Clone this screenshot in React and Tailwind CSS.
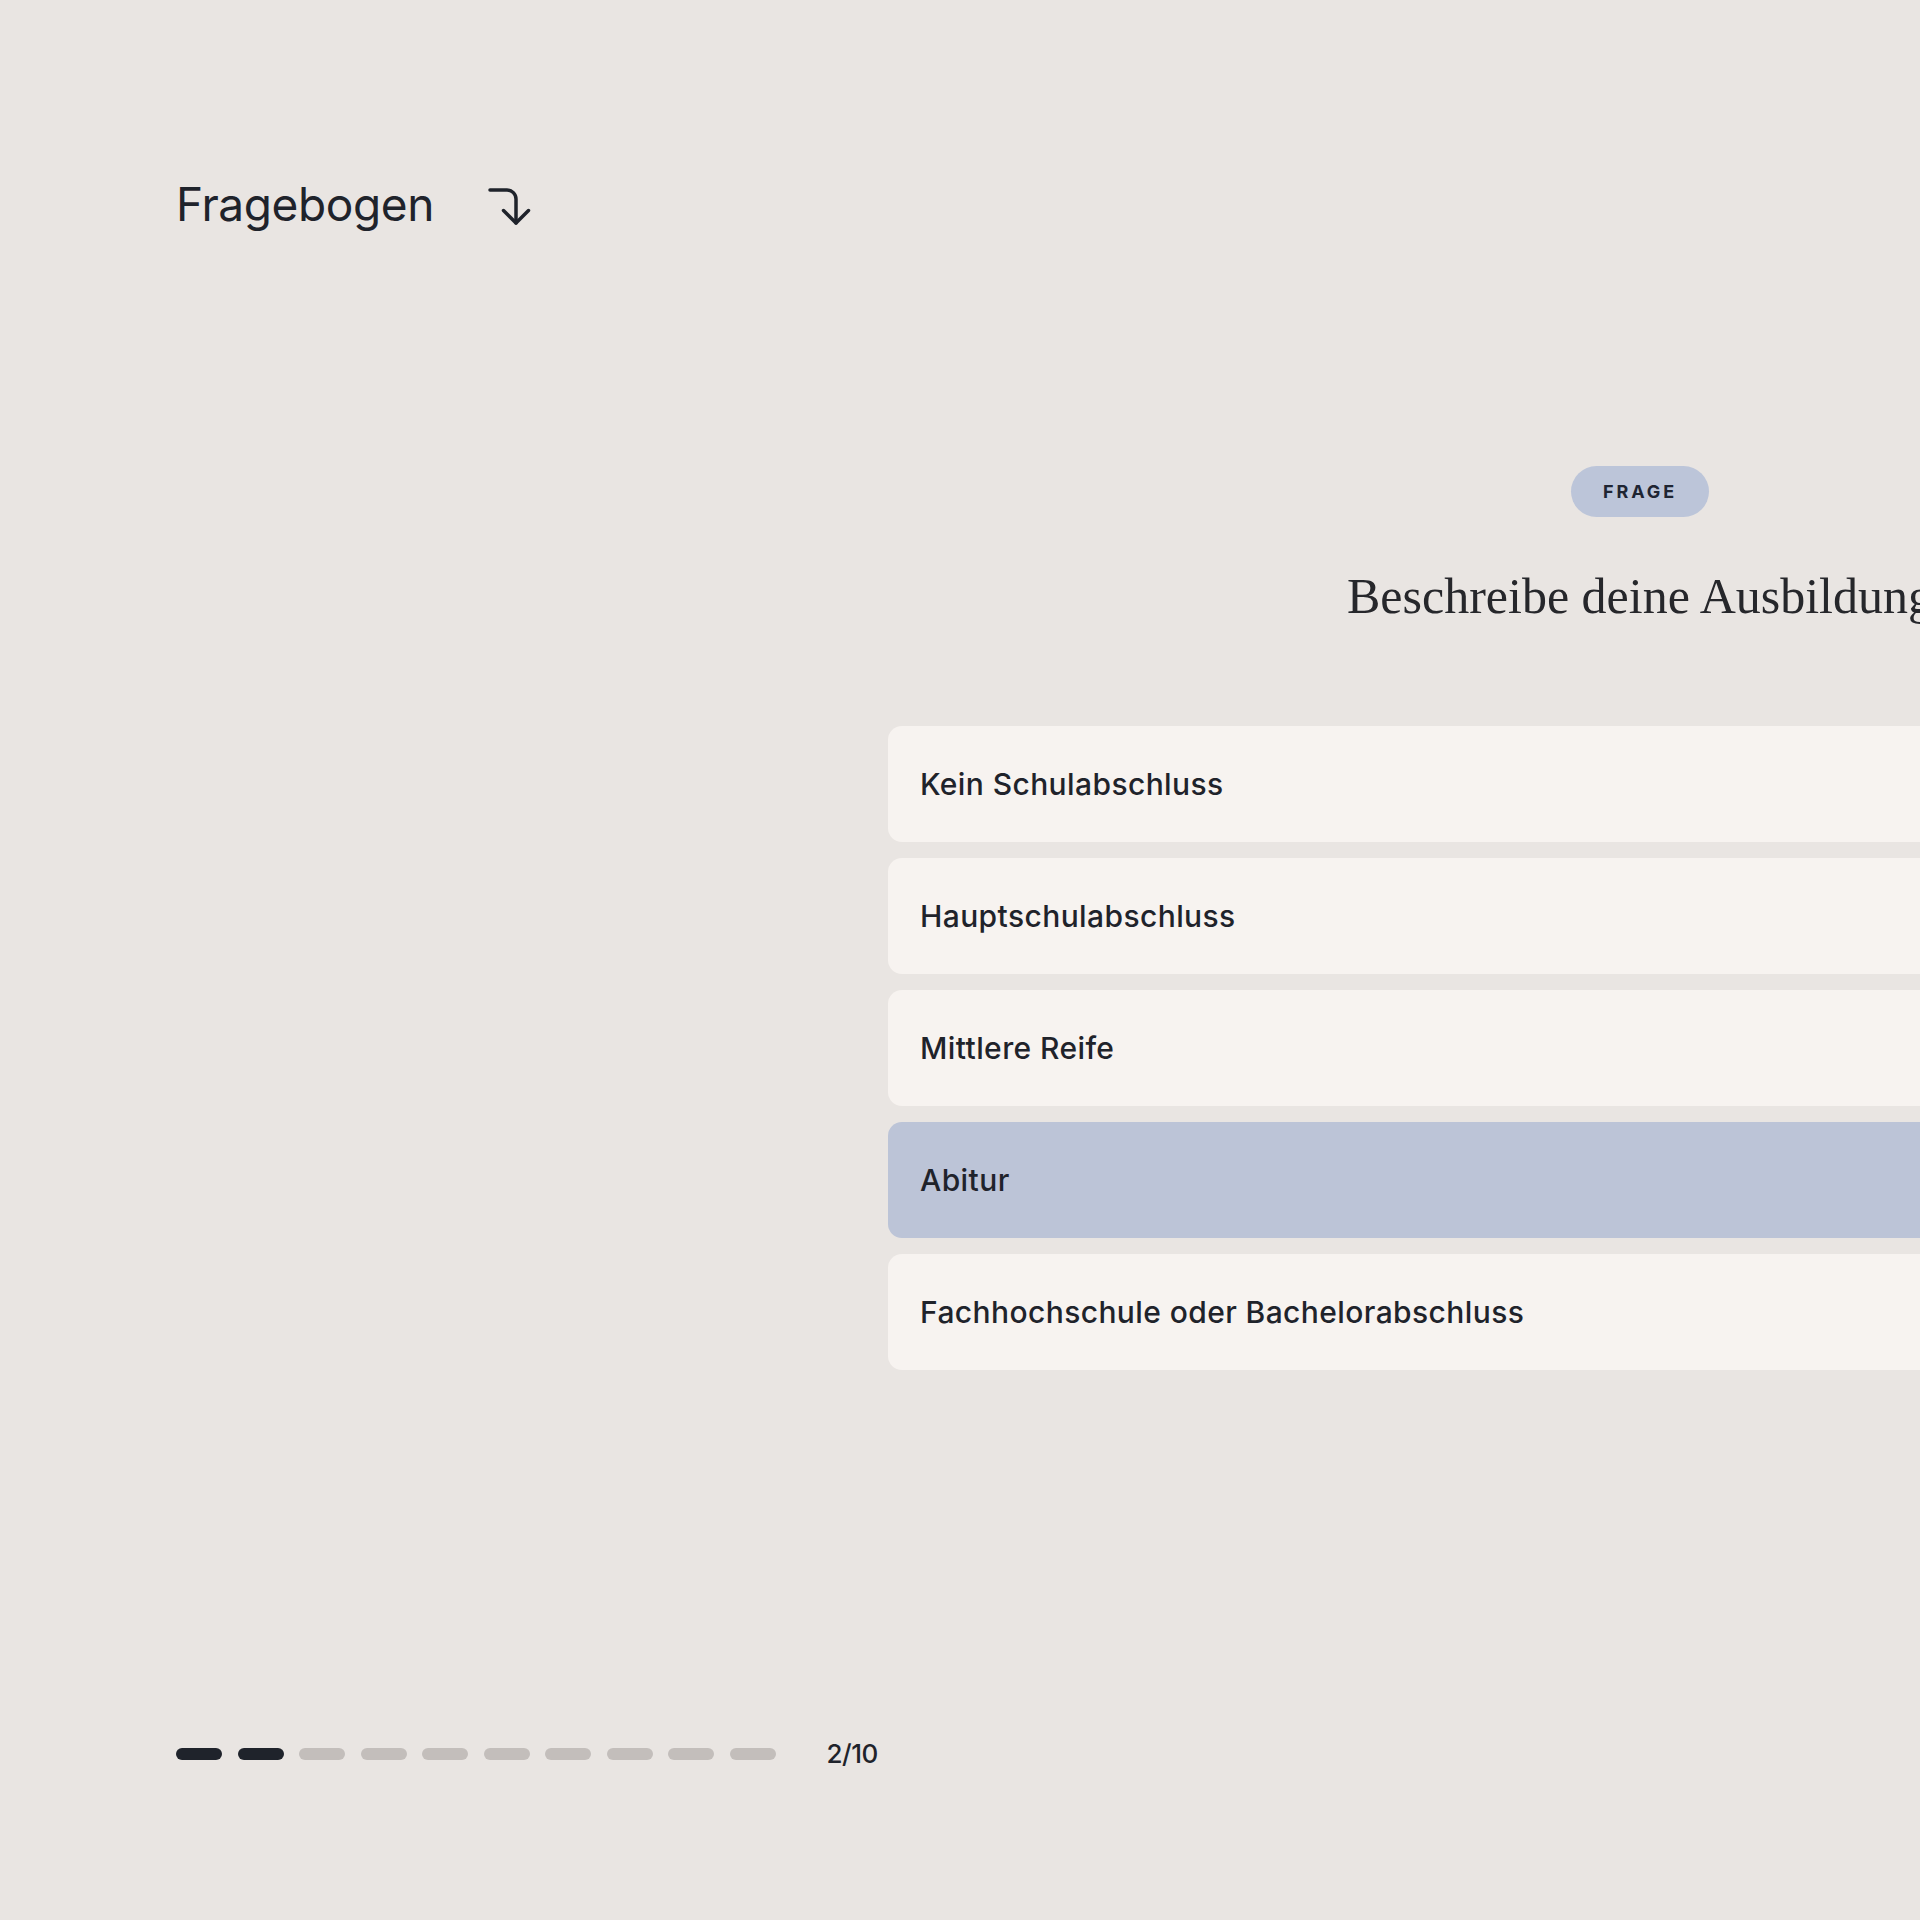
import React, { useState } from "react";

const options = [
  "Kein Schulabschluss",
  "Hauptschulabschluss",
  "Mittlere Reife",
  "Abitur",
  "Fachhochschule oder Bachelorabschluss",
];

const TOTAL = 10;
const CURRENT = 2;

const CornerArrow = () => (
  <svg
    width="44"
    height="42"
    viewBox="0 0 44 42"
    fill="none"
    stroke="#1f232b"
    strokeWidth="3.5"
    strokeLinecap="round"
    strokeLinejoin="round"
  >
    <path d="M2 5H19a9 9 0 0 1 9 9V38" />
    <path d="M15.5 25.5 28 38l12.5-12.5" />
  </svg>
);

const App = () => {
  const [selected, setSelected] = useState(3);

  return (
    <div className="w-[1920px] h-[1920px] overflow-hidden flex bg-[#e9e5e2] text-[#1f232b] font-['Inter','Noto_Sans',sans-serif]">
      {/* left side: title + progress */}
      <aside className="w-[888px] shrink-0 pl-[176px] pt-[181px] pb-[153px] flex flex-col justify-between">
        <div className="flex items-start gap-[54px]">
          <h1 className="text-[46px] leading-none font-normal tracking-[-0.4px]">
            Fragebogen
          </h1>
          <div className="mt-[4px]">
            <CornerArrow />
          </div>
        </div>

        <div className="flex items-center gap-[51px]">
          <div className="flex gap-[15.5px]">
            {Array.from({ length: TOTAL }).map((_, i) => (
              <span
                key={i}
                className={
                  i < CURRENT
                    ? "block w-[46px] h-[12px] rounded-full bg-[#1f232b]"
                    : "block w-[46px] h-[12px] rounded-full bg-[#c3bebb]"
                }
              />
            ))}
          </div>
          <span className="text-[26px] leading-none font-medium tracking-[-0.5px]">
            {CURRENT}/{TOTAL}
          </span>
        </div>
      </aside>

      {/* question */}
      <main className="w-[1504px] shrink-0 pt-[466px] flex flex-col items-center">
        <span className="h-[51px] px-[32px] flex items-center rounded-full bg-[#bcc5d9] text-[18px] font-bold tracking-[0.16em] text-[#1f2533]">
          FRAGE
        </span>
        <h2 className="mt-[54px] text-[50px] leading-none font-['Liberation_Serif',serif] font-normal text-[#26272b] whitespace-nowrap">
          Beschreibe deine Ausbildung
        </h2>

        <div className="mt-[105px] w-full flex flex-col gap-[16px]">
          {options.map((opt, i) => (
            <button
              key={opt}
              type="button"
              onClick={() => setSelected(i)}
              className={
                selected === i
                  ? "h-[116px] w-full rounded-[14px] pl-[32px] flex items-center text-left text-[30px] font-medium tracking-[0.4px] bg-[#bcc4d7]"
                  : "h-[116px] w-full rounded-[14px] pl-[32px] flex items-center text-left text-[30px] font-medium tracking-[0.4px] bg-[#f7f3f0]"
              }
            >
              {opt}
            </button>
          ))}
        </div>
      </main>
    </div>
  );
};

export default App;
